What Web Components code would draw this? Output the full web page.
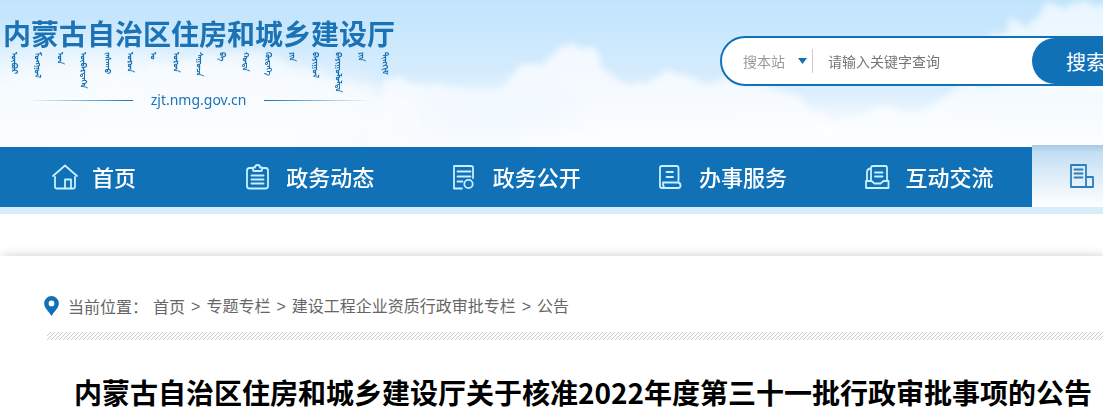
<!DOCTYPE html>
<html lang="zh-CN">
<head>
<meta charset="utf-8">
<meta name="viewport" content="width=device-width, initial-scale=1">
<title>内蒙古自治区住房和城乡建设厅</title>
<style>
  body {
    margin: 0;
    background: #fff;
    color: #666;
    font-family: "Noto Sans CJK SC", sans-serif;
    font-size: 16px;
    overflow-x: hidden;
  }
</style>
</head>
<body>
<site-header>
  <site-logo></site-logo>
  <site-search></site-search>
</site-header>

<site-nav>
  <nav-item icon="home" href="#home">首页</nav-item>
  <nav-item icon="clipboard" href="#news">政务动态</nav-item>
  <nav-item icon="record" href="#open">政务公开</nav-item>
  <nav-item icon="scroll" href="#service">办事服务</nav-item>
  <nav-item icon="tray" href="#talk">互动交流</nav-item>
  <nav-item icon="building" href="#topic" active></nav-item>
</site-nav>

<article-card>
  <bread-crumb slot="crumb">
    <a href="#home">首页</a>
    <a href="#topic">专题专栏</a>
    <a href="#approval">建设工程企业资质行政审批专栏</a>
    <a href="#notice">公告</a>
  </bread-crumb>
  内蒙古自治区住房和城乡建设厅关于核准2022年度第三十一批行政审批事项的公告
</article-card>

<script>
function attach(el, html) {
  const template = document.createElement("template");
  template.innerHTML = html;
  el.attachShadow({ mode: "open" });
  el.shadowRoot.appendChild(template.content.cloneNode(true));
}

class SiteHeader extends HTMLElement {
  constructor() {
    super();
    attach(this, `
      <style>
        :host {
          display: block;
          position: relative;
          overflow: hidden;
          background: linear-gradient(#c1e4fd, #d3ebfd 45%, #e2f2fe 75%, #eef8ff);
        }
        .sky {
          position: absolute;
          inset: 0;
          width: 100%;
          height: 100%;
        }
        .row {
          position: relative;
          display: flex;
          justify-content: space-between;
          height: 147px;
        }
      </style>
      <svg class="sky" viewBox="0 0 1103 147" preserveAspectRatio="xMinYMin slice" aria-hidden="true">
        <defs>
          <filter id="soft" x="-10%" y="-30%" width="120%" height="160%">
            <feTurbulence type="fractalNoise" baseFrequency="0.05" numOctaves="4" seed="7" result="n"/>
            <feDisplacementMap in="SourceGraphic" in2="n" scale="18" xChannelSelector="R" yChannelSelector="G"/>
            <feGaussianBlur stdDeviation="3"/>
          </filter>
          <filter id="haze" x="-20%" y="-60%" width="140%" height="220%">
            <feGaussianBlur stdDeviation="14"/>
          </filter>
        </defs>
        <g filter="url(#haze)" fill="#fff">
          <ellipse cx="150" cy="115" rx="240" ry="60" opacity=".75"/>
          <ellipse cx="60" cy="60" rx="90" ry="24" opacity=".35"/>
          <ellipse cx="820" cy="160" rx="380" ry="44" opacity=".9"/>
        </g>
        <g filter="url(#soft)" fill="#fbfdff">
          <path opacity=".5" d="M100 84 L165 64 215 54 265 52 300 66 350 84 395 94 420 100 V160 H60Z"/>
          <path opacity=".8" d="M385 78 L405 78 450 86 500 86 520 70 540 66 552 50 572 46 596 48 604 70 622 84 650 80 675 70 700 82 730 80 765 86 800 98 826 116 850 170 H360Z"/>
          <path opacity=".75" d="M820 130 L850 118 880 108 910 112 940 98 970 84 1000 86 1120 76 V170 H810Z"/>
          <path opacity=".7" d="M990 40 L1010 22 1030 22 1048 8 1075 4 1120 2 V90 H1000Z"/>
        </g>
        <g filter="url(#haze)" fill="#eef7fe">
          <ellipse cx="500" cy="110" rx="70" ry="18" opacity=".8"/>
        </g>
      </svg>
      <div class="row"><slot></slot></div>
    `);
  }
}

class SiteLogo extends HTMLElement {
  constructor() {
    super();
    const words = [
      "ᠥᠪᠥᠷ", "ᠮᠣᠩᠭᠣᠯ", "ᠤᠨ", "ᠥᠪᠡᠷᠲᠡᠭᠡᠨ", "ᠵᠠᠰᠠᠬᠤ", "ᠣᠷᠣᠨ", "ᠤ", "ᠣᠷᠣᠨ", "ᠰᠠᠭᠤᠴᠠ",
      "ᠪᠠ", "ᠬᠣᠲᠠ", "ᠬᠥᠳᠡᠭᠡ", "ᠶᠢᠨ", "ᠪᠠᠶᠢᠭᠤᠯ", "ᠪᠠᠶᠢᠭᠤᠯᠤᠯᠲᠠ", "ᠶᠢᠨ", "ᠲᠢᠩᠬᠢᠮ"
    ];
    attach(this, `
      <style>
        :host {
          display: block;
          flex: none;
          width: 391px;
          padding: 15px 0 0 3px;
          color: #1b73b5;
        }
        .name {
          font-size: 28px;
          font-weight: 700;
          line-height: 36px;
          white-space: nowrap;
        }
        .mongol {
          display: flex;
          justify-content: space-between;
          height: 38px;
          padding: 1px 0 0 3px;
          font-size: 8px;
          font-weight: 700;
          line-height: 18px;
        }
        .mongol span {
          writing-mode: vertical-lr;
          white-space: nowrap;
        }
        .site {
          display: flex;
          align-items: center;
          gap: 18px;
          padding: 0 24px;
          font: 14px/20px "Noto Sans", sans-serif;
        }
        .site::before, .site::after {
          content: "";
          flex: 1;
          height: 1px;
          background: linear-gradient(to right, transparent, #1b73b5);
        }
        .site::after {
          background: linear-gradient(to left, transparent, #1b73b5);
        }
      </style>
      <div class="name">内蒙古自治区住房和城乡建设厅</div>
      <div class="mongol" lang="mn-Mong">${words.map((w) => `<span>${w}</span>`).join("")}</div>
      <div class="site">zjt.nmg.gov.cn</div>
    `);
  }
}

class SiteSearch extends HTMLElement {
  constructor() {
    super();
    attach(this, `
      <style>
        :host {
          display: block;
          flex: none;
          width: 383px;
          padding-top: 36px;
        }
        form {
          display: flex;
          align-items: center;
          box-sizing: border-box;
          width: 440px;
          height: 50px;
          border: 2px solid #1171b7;
          border-radius: 25px;
          background: #fff;
          overflow: hidden;
        }
        select, input, button {
          margin: 0;
          border: 0;
          outline: 0;
          font: inherit;
          font-size: 14px;
        }
        .scope {
          display: flex;
          align-items: center;
          box-sizing: border-box;
          width: 91px;
          height: 24px;
          padding: 0 5px 0 21px;
          border-right: 1px solid #ccc;
        }
        select {
          appearance: none;
          flex: 1;
          min-width: 0;
          padding: 0;
          background: none;
          color: #999;
        }
        .scope svg {
          flex: none;
        }
        input {
          flex: 1;
          min-width: 0;
          padding: 0 0 0 15px;
          background: none;
          color: #333;
        }
        input::placeholder {
          color: #757575;
        }
        button {
          width: 126px;
          height: 46px;
          padding: 0 0 0 34px;
          border-radius: 23px;
          background: #1171b7;
          color: #fff;
          font-size: 20px;
          text-align: left;
        }
      </style>
      <form>
        <div class="scope">
          <select aria-label="搜索范围"><option>搜本站</option></select>
          <svg width="9" height="6" viewBox="0 0 9 6" aria-hidden="true"><path d="M0 0h9L4.500 6z" fill="#1171b7"/></svg>
        </div>
        <input type="text" placeholder="请输入关键字查询" aria-label="关键字">
        <button type="button">搜索</button>
      </form>
    `);
  }
}

class SiteNav extends HTMLElement {
  constructor() {
    super();
    attach(this, `
      <style>
        :host {
          display: block;
          position: relative;
          background: #1171b7;
          border-bottom: 7px solid #d8ecf9;
        }
        nav {
          display: grid;
          grid-template-columns: repeat(5, minmax(0, 29fr)) minmax(0, 10fr);
          height: 60px;
        }
      </style>
      <nav><slot></slot></nav>
    `);
  }
}

const ICONS = {
  home: `<path d="M1 12 13 1.500 25 12M3 13v10q0 1.500 1.500 1.500h17q1.500 0 1.500-1.500V13M13 24v-8.500h6V24"/>`,
  clipboard: `<path d="M7 4H3.500Q1 4 1 6.500V22q0 2.500 2.500 2.500h16q2.500 0 2.500-2.500V6.500Q22 4 19.500 4H16M7 3.500h2Q9 1 11.500 1T14 3.500h2V6q0 1-1 1H8Q7 7 7 6zM5.500 11.500h12M5.500 15.500h12M5.500 19.500h12"/>`,
  record: `<path d="M20 14V4q0-2-2-2H1v22.500h8M4.500 7.500h13M4.500 12.500h13M4.500 17.500h5"/><circle cx="15.500" cy="20" r="4.200"/>`,
  scroll: `<path d="M19.500 17V4q0-2-2-2H3Q1 2 1 4v18q0 2 2 2h16q2.500 0 2.500-2.500T19 18.500H4v2.500q1.500 1 0 3M7.500 8h6.500M7.500 13h6.500"/>`,
  tray: `<path d="M6 16.500V4q0-2 2-2h12.500q1.500 0 1.500 2v12.500M5.500 4.500Q2 5 2 8v8M10 8.500h7.500M10 12.500h7.500M1 24v-7h5.500l3 2.500h6l3-2.500H23.500v7z"/>`,
  building: `<path d="M1 2h15v22H1zM16 14h7v10h-7M4.500 6.500h8M4.500 10.500h8M4.500 14.500h8"/>`
};

class NavItem extends HTMLElement {
  constructor() {
    super();
    attach(this, `
      <style>
        :host {
          display: block;
          color: #fff;
        }
        :host([active]) {
          margin-top: -2px;
          background: linear-gradient(#a8cae4, #c3dff3 12%, #fff);
          color: #2f7dba;
        }
        a {
          display: flex;
          align-items: center;
          gap: 14px;
          box-sizing: border-box;
          height: 60px;
          padding-left: 40px;
          overflow: hidden;
          color: inherit;
          font-size: 22px;
          font-weight: 500;
          line-height: 32px;
          text-decoration: none;
          white-space: nowrap;
        }
        :host([icon="home"]) a {
          padding-left: 52px;
        }
        :host([active]) a {
          height: 62px;
          padding-left: 38px;
        }
        span {
          padding-bottom: 2px;
        }
        svg {
          flex: none;
          fill: none;
          stroke: #c9f0ff;
          stroke-width: 1.8;
          stroke-linejoin: round;
          stroke-linecap: round;
        }
        :host([active]) svg {
          stroke: currentColor;
        }
      </style>
      <a><svg width="26" height="26" viewBox="0 0 26 26" aria-hidden="true"></svg><span><slot></slot></span></a>
    `);
  }

  connectedCallback() {
    const link = this.shadowRoot.querySelector("a");
    link.href = this.getAttribute("href");
    link.querySelector("svg").innerHTML = ICONS[this.getAttribute("icon")];
    if (this.hasAttribute("active")) {
      link.setAttribute("aria-label", "专题专栏");
    }
  }
}

class BreadCrumb extends HTMLElement {
  constructor() {
    super();
    attach(this, `
      <style>
        :host {
          display: flex;
          align-items: center;
          height: 24px;
          line-height: 24px;
          white-space: nowrap;
        }
        svg {
          flex: none;
          margin-right: 9px;
        }
        .label {
          margin-right: 5px;
        }
        ::slotted(a) {
          color: inherit;
          text-decoration: none;
        }
        ::slotted(a:not(:first-child))::before {
          content: ">";
          margin: 0 6px;
          font-family: "Liberation Sans", sans-serif;
        }
      </style>
      <svg width="15" height="20" viewBox="0 0 15 20" aria-hidden="true">
        <path fill="#1171b7" fill-rule="evenodd" d="M7.500 0A7.300 7.300 0 0 0 .2 7.300C.2 12 4 14.500 7.500 20 11 14.500 14.800 12 14.800 7.300A7.300 7.300 0 0 0 7.500 0zM7.500 4.500a2.900 2.900 0 1 1 0 5.800 2.900 2.900 0 0 1 0-5.800z"/>
      </svg>
      <span class="label">当前位置：</span>
      <slot></slot>
    `);
  }
}

class ArticleCard extends HTMLElement {
  constructor() {
    super();
    attach(this, `
      <style>
        :host {
          display: block;
          margin-top: 42px;
          padding: 38px 0 0 44px;
          background: #fff;
          box-shadow: 2px 0 10px rgba(0, 0, 0, 0.2);
        }
        .hatch {
          display: block;
          width: 100%;
          height: 8px;
          margin: 14px 0 0 3px;
        }
        h1 {
          margin: 34px 0 0;
          padding-left: 30px;
          color: #000;
          font-size: 28px;
          font-weight: 700;
          line-height: 36px;
          white-space: nowrap;
        }
      </style>
      <slot name="crumb"></slot>
      <svg class="hatch" aria-hidden="true">
        <pattern id="lines" width="4" height="8" patternUnits="userSpaceOnUse">
          <path d="M-8 8 0 0M-4 8 4 0M0 8 8 0M4 8 12 0" stroke="#ccc" stroke-width="1"/>
        </pattern>
        <rect width="100%" height="8" fill="url(#lines)"/>
      </svg>
      <h1><slot></slot></h1>
    `);
  }
}

customElements.define("site-header", SiteHeader);
customElements.define("site-logo", SiteLogo);
customElements.define("site-search", SiteSearch);
customElements.define("site-nav", SiteNav);
customElements.define("nav-item", NavItem);
customElements.define("bread-crumb", BreadCrumb);
customElements.define("article-card", ArticleCard);
</script>
</body>
</html>
